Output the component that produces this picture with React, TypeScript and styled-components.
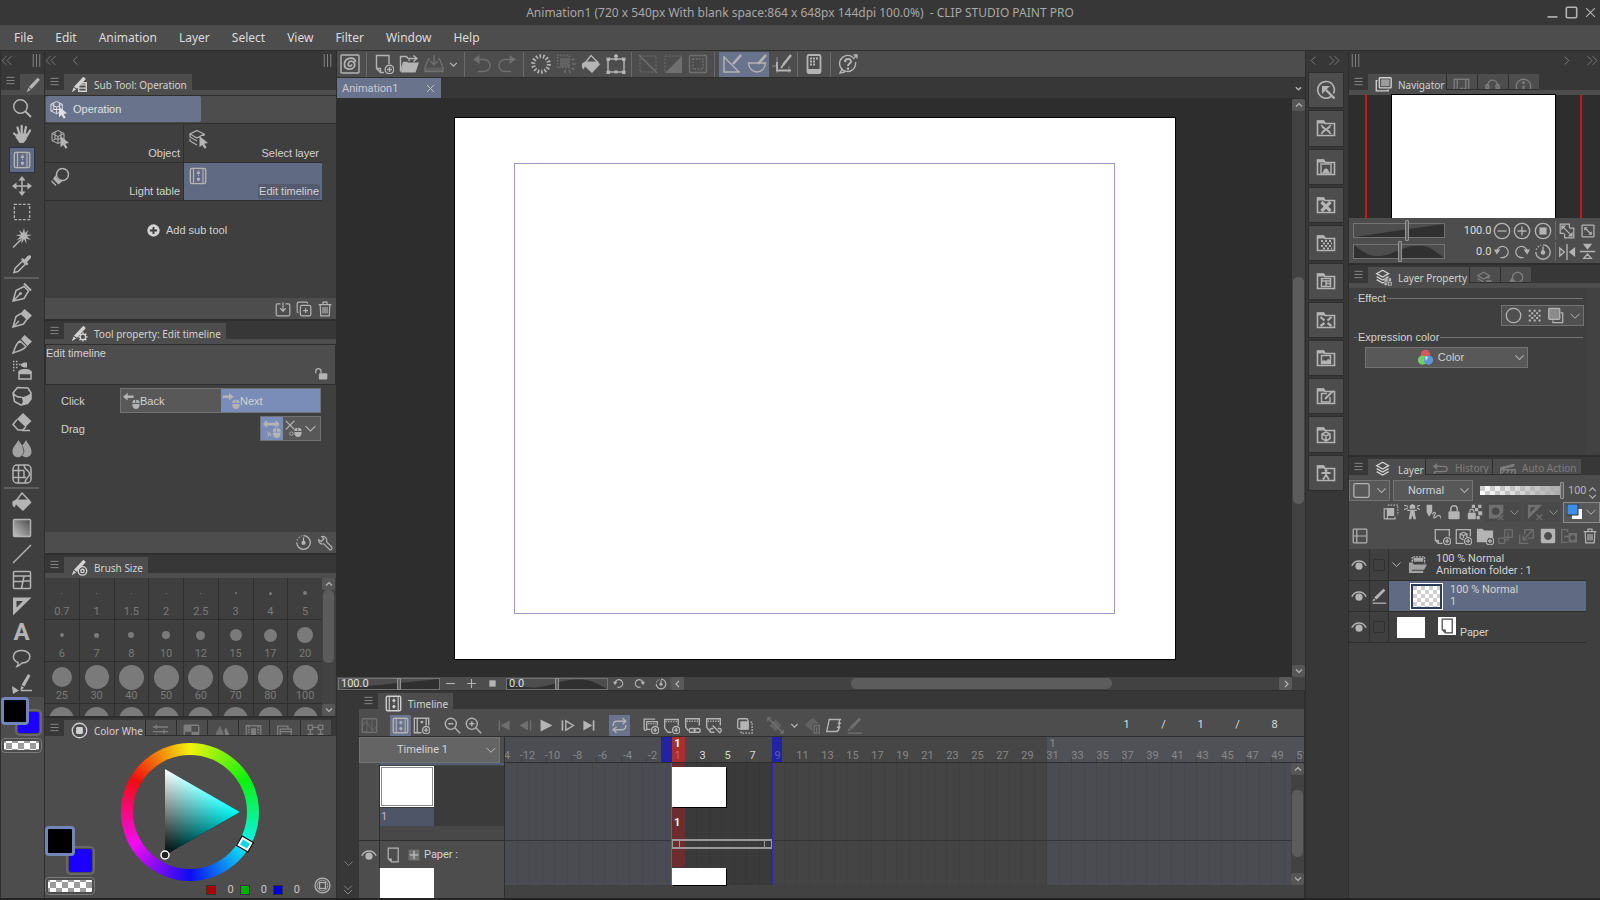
import React from 'react';
import styled, { createGlobalStyle, css } from 'styled-components';

const c = {
  dark: '#373737', bar: '#4d4d4d', body: '#3f3f3f', line: '#2e2e2e', stage: '#2d2d2d',
  sel: '#606a82', selLight: '#69738c', blue: '#798db8', icon: '#b4b4b4', dim: '#6f6f6f',
  text: '#d2d2d2', edge: '#737373', field: '#585858',
};
const ui = '"Noto Sans", "Open Sans", sans-serif';
const arial = '"Liberation Sans", Arial, sans-serif';
const roboto = 'Roboto, "Liberation Sans", sans-serif';

const Global = createGlobalStyle`
  *, *::before, *::after { box-sizing: border-box; }
  body { margin: 0; background: ${c.dark}; color: ${c.text}; font: 11px/14px ${roboto}; }
  button, select, input { font: inherit; color: inherit; margin: 0; }
  button { background: none; border: 0; padding: 0; }
  svg { display: block; flex: none; }
`;

/* ---------- icons, drawn on a 20 x 20 grid ---------- */
const F = { fill: 'currentColor', stroke: 'none' };
const cube = <path d="M8 1.500l6 3v7l-6 3-6-3v-7zM2 4.500l6 3 6-3M8 7.500v7M5 3v7l-3 2M11 3v7M5 10h6" strokeWidth="1" strokeLinejoin="round" />;
const arrow = <path {...F} d="M10.500 7l8.500 7-3.800.7 2.400 3.800-2 1.300-2.400-3.900-2.700 2.300z" />;
const plusBadge = <><circle cx="15.5" cy="15.5" r="4.3" /><path d="M13 15.5h5M15.5 13v5" /></>;
const pencil = <path {...F} d="M14.5 1l3 2.5L7 15l-3.5-2.5zM3 13.5L6 16l-5 3z" />;
const folder = <><path d="M1.5 17.500v-14.500h6l1.500 2.500h9.500v12z" strokeWidth="1.600" /><path {...F} d="M1.500 2.500h6.500l1.500 3h-8z" /></>;
const film = <><rect x="1.5" y="1.5" width="17" height="17" rx="1.5" /><path d="M5 2v16M15.5 2v16" strokeWidth="1.300" /><path d="M10.5 3v14" strokeWidth="1" strokeDasharray="1 2" /><circle {...F} cx="10.5" cy="6.500" r="1.800" /><circle {...F} cx="10.5" cy="13.500" r="1.800" /></>;
const mouse = <><path {...F} d="M11 13v-.5C11 10 12.500 9 14.500 9v4zM15.500 9c2.500 0 4 1 4 3.500v.5h-4z" /><path {...F} d="M11 14h8.500v1c0 3-1.500 5-4.200 5S11 18 11 15z" /></>;
const stack = <path d="M9 1.500l7 4-7 4-7-4zM2 9l7 4 7-4M2 12.500l7 4 7-4" />;

const ICONS: Record<string, React.ReactNode> = {
  search: <><circle cx="8.500" cy="8.500" r="6.800" /><path d="M13.500 13.500l5.500 5.500" strokeWidth="2" /></>,
  hand: <><path d="M2 9.500l4.500 4M5.500 3.500l2 7M9.700 2v8M14 3l-1.500 7M18 6.500l-3.500 6" strokeWidth="2.300" strokeLinecap="round" /><path {...F} d="M5.500 9.500h9.500l-.5 6-3 3.500h-4l-4-6z" /></>,
  film,
  filmPlus: <><path d="M18.500 10V1.500h-17v17H10M5 2v16M15.500 2v8" /><circle {...F} cx="10.500" cy="6" r="1.700" />{plusBadge}</>,
  move: <><path d="M10 3v14M3 10h14" /><path {...F} d="M10 0l3.500 4.500h-7zM10 20l3.500-4.500h-7zM0 10l4.500-3.500v7zM20 10l-4.500-3.500v7z" /></>,
  marquee: <rect x="1.500" y="1.500" width="17" height="17" strokeDasharray="3 1.800" />,
  wand: <><path d="M1 19.500l8-8" /><path {...F} d="M12 0l1 5 3.500-3-2 4.500 5.500.5-5 1.500 4 3.500-5-1.500.5 5.500-2.500-5-2.500 5v-5.500l-5 1.500 4-3.500-5-1.500 5.500-.5-2-4.500 3.500 3z" /></>,
  dropper: <><path d="M2 18.500l1-4 7.500-7.500 3 3-7.500 7.500z" /><path {...F} d="M9 5.500l1.500-1.500 2 1.500 3-3.500c3-2 4.500.5 3 2.500l-3.500 3.500 1.500 2-1.500 1.500z" /></>,
  nib: <><path d="M1 19l3-10.500 8-4 4.500 4.500-4.500 7.500zM1 19l7-7" /><circle {...F} cx="8.500" cy="11.500" r="1.500" /><path d="M12 1.500l7 7" strokeWidth="2" /></>,
  nibSolid: <><path d="M1 19l3-10.500 5-3 6 5.500-3.500 5z" /><path {...F} d="M9 5l3.500-4 7.500 6.500-4.500 4.500z" /><path d="M1 19l6-6" /></>,
  brush: <><path {...F} d="M9 5l3.500-4 7.500 6.500-4.500 4.500z" /><path d="M1 19c2-3 2-9 7-12l6 5.500c-3 4-8 4.500-13 6.500z" /></>,
  airbrush: <><path d="M1 1.500h6M1 4.500h8M1 7.500h6M1 10.500h3" strokeDasharray="1.500 1.500" /><path {...F} d="M9 4l3-1.500h3v5h-3L9 6z" /><path {...F} d="M6 13c0-3 3-4 7-4s7 1 7 4z" /><rect x="7" y="13.500" width="12" height="5.500" /></>,
  tape: <><path d="M1 7l4.500-5.500L16 2l3 5v6l-3.500 4.500L9 19l-6.500-3.500zM1 7c3 4 6 4.500 8.500 4" strokeLinejoin="round" /><path {...F} d="M9 11c4 0 7-1.500 10-4v6l-3.500 4.500L9 19c2-2 2.500-5 0-8z" /></>,
  eraser: <><path {...F} d="M11 1l8.500 8-6 6L5 7z" /><path d="M5 7.500l-4 5 5 5.500h5l3-3.500M10 18.500h8" /></>,
  blend: <><path {...F} opacity=".85" d="M6.500 2C4.500 6 .5 9 .5 13.500a5.500 5.500 0 0 0 9.500 4 5.500 5.500 0 0 0 9.500-4c0-4.500-4-8.500-5.500-11.500-1 2-2.500 4-3.700 5.500C9 6 7.500 4 6.500 2z" /><path d="M10.300 8c2 4 2 7-.3 9.500" stroke="#555" strokeWidth="1" /></>,
  mesh: <><rect x="1" y="1" width="18" height="18" rx="4" /><path d="M6.500 1v18M1 6.500h11M1 13.500h13M12 1c0 4 2 4 4 6s2 4 0 6-3 3-3 6M12 6.500v7" /></>,
  bucket: <><path d="M4 9l6-7.500 7 7" /><path {...F} d="M1 9.500L4 7.500h13l2 3-8 8.500-7-6.500-1.500 3c-1.500-1-2-3.500-1.500-6z" /></>,
  bucketBig: <><path d="M4 9l6-8 8 8.500" /><path {...F} d="M.5 9.500L4 7.500h13l2.500 3L11 19l-7-6.500-1.500 3C.5 14.500 0 12 .5 9.500z" /></>,
  lineT: <path d="M1 19L19 1" />,
  frame: <><rect x="1.500" y="1.500" width="17" height="17" rx="1" /><path d="M1.500 6h17M1.500 11.500h9M12 6l-2.500 12.500M11 11h8" /></>,
  ruler: <path {...F} fillRule="evenodd" d="M1 1.500h18.500L1 19.500zM4.500 5v6.500l6.500-6.500z" />,
  balloon: <path d="M5 18.500c1-1.500 1.500-2.500 1-4-7-3-6-12 4-12s11 12 0 12.500c-1.500 1.500-3 3-5 3.500z" />,
  correct: <><path d="M9 16.500h11" /><path {...F} d="M16 0l2.500 1.500-6 11-3-1.500zM9 12l3 1.500L8.500 17zM0 12l7 4.500L1 20z" /></>,
  objectSel: <>{cube}{arrow}</>,
  layerSel: <><path d="M8 1.500l7 3.500-7 4-7-4zM1 5v3l7 4M1 10v2l7 4M15 5v2" />{arrow}</>,
  lamp: <><circle cx="12.500" cy="7.500" r="6" /><path {...F} d="M5.500 8c1 4 3 5.500 7 6l-4 3.500-5.500-5.500zM1 14.500l1-1 4.500 4.500-1 1z" /></>,
  plusSolid: <><circle {...F} cx="10" cy="10" r="9.500" /><path d="M4.500 10h11M10 4.500v11" stroke="#3f3f3f" strokeWidth="3" /></>,
  save: <path d="M7 3.500H3c-1 0-1.500.5-1.500 1.500v12c0 1 .5 1.500 1.500 1.500h14c1 0 1.500-.5 1.500-1.500v-12c0-1-.5-1.500-1.500-1.500h-4M10 2v10M6.500 9l3.500 4 3.500-4" />,
  dup: <><rect x="5.500" y="5.500" width="13" height="13" rx="2" /><path d="M3 14.500c-1 0-1.500-.5-1.500-1.500V3c0-1 .5-1.500 1.500-1.500h10c1 0 1.500.5 1.500 1.500M12 9v6M9 12h6" /></>,
  trash: <path d="M4 5l.7 13.500h10.600L16 5M2 4.500h16M7.500 4V1.500h5V4M7.500 7.500v8M10 7.500v8M12.500 7.500v8" />,
  subIcon: <>{pencil}<path d="M9 10.500h9M11 8h7v10h-9v-7M9 14.300h9" /></>,
  gearPencil: <>{pencil}<circle cx="14" cy="14" r="3.200" /><path d="M14 8.500v2M14 17.500v2M8.500 14h2M17.500 14h2M10 10l1.500 1.500M16.500 16.500L18 18M18 10l-1.500 1.500M10 18l1.500-1.500" /></>,
  circlePencil: <>{pencil}<circle cx="13.500" cy="14" r="5" /><circle cx="13.500" cy="14" r="2" /></>,
  pencil,
  unlock: <><rect {...F} x="7" y="9" width="12" height="9" rx="1.500" /><path d="M10 9V5.500a3.800 3.800 0 0 0-7.500 0V9" strokeWidth="1.800" /></>,
  back: <><path {...F} d="M0 5.500L5.500 1v3h7v3h-7v3z" />{mouse}</>,
  next: <><path {...F} d="M12.500 5.500L7 1v3H0v3h7v3z" />{mouse}</>,
  drag: <><path {...F} d="M0 4.500L4.500 0v3H14V0l4.500 4.500L14 9V6H4.500v3z" />{mouse}<path d="M5 13l1 5 1.500-4 1.500 4" strokeWidth="1" /></>,
  cut: <><path d="M1 1l10 10M11 1L1 11" />{mouse}<circle cx="7.500" cy="16" r="2" strokeWidth="1" /></>,
  reset: <><path d="M10 2a8 8 0 1 1-8 8" /><path d="M2.500 7.500A8 8 0 0 1 8 2.300" strokeDasharray="1.500 2" /><circle {...F} cx="10" cy="10.500" r="2.500" /><path d="M10 4v7" /></>,
  wrench: <path d="M12 8.500c1-3.500-1.500-7.500-6-6.500l2.500 3-3 3-3.500-2c0 4 3 6 6.500 5l7 7c2 1.500 4-1 3-3z" />,
  wheel: <><circle cx="10" cy="10" r="8.500" /><rect {...F} x="6" y="6" width="8" height="8" rx="1.500" /></>,
  wheelLine: <><circle cx="10" cy="10" r="8.800" /><circle cx="10" cy="10" r="6.300" strokeWidth="1" /><rect x="6.500" y="6.500" width="7" height="7" /></>,
  slidersI: <path d="M1 3.500h18M1 9h18M1 14.500h18M5 1v5M14 6.500v5M5 12v5" />,
  setI: <><rect x="1.500" y="1.500" width="17" height="15" rx="1" /><path {...F} d="M2 2h8v7H2zM10 9h8v7h-8z" /></>,
  mount: <><path {...F} opacity=".7" d="M7 2C5 6 1.500 10 1.500 17H12C12 11 9 6 7 2z" /><path {...F} d="M14 4c-1 1-1.500 3-2 4 1 2 1.500 6 1.500 9h5c0-5-2.500-9-4.500-13z" /></>,
  strip: <><rect x="1.500" y="2" width="17" height="15" /><path d="M4.500 2v15M15.500 2v15" strokeDasharray="2 1.500" strokeWidth="2.500" /><rect {...F} x="7" y="5" width="6" height="9" /></>,
  folders: <><rect x="5" y="6" width="13" height="12" /><path d="M2 14V2.500h12V6M5 9h13" /></>,
  nodes: <><rect x="1.500" y="1.500" width="5" height="5" /><rect x="13.500" y="1.500" width="5" height="5" /><rect x="1.500" y="12" width="5" height="5" /><rect x="13.500" y="12" width="5" height="5" /><path d="M6.500 4h7M4 6.500V12M16 6.500V12" /></>,
  clip: <><rect x="1" y="1" width="18" height="18" rx="1" /><path d="M15.500 8c0-6-10.500-5-11 2s8.500 6 10 2-4.500-7-6-3 2.500 3.500 3.500 1.500" strokeWidth="1.700" /></>,
  newDoc: <><path d="M15 10V1.500H2.500v13l4 4H10M2.500 14.500h4v4" />{plusBadge}</>,
  open: <><path d="M9 4.500l-1.500-2H1.500v15l3-9h4M10 7V4.500h7M14.500 1.500l3.500 3-3.500 3" /><path {...F} d="M5 8.500h15l-3.500 10H2z" /></>,
  saveDisk: <><path d="M10 1v9M6.500 7l3.500 4 3.500-4M6 5H4.500L1 13.500v4h18v-4L15.500 5H14" /><path {...F} opacity=".5" d="M1 13.500h18v4H1z" /></>,
  undo: <><path d="M4 5.500h8a6 6 0 0 1 0 12H6" /><path {...F} d="M1 5.500L7.500 1v9z" /></>,
  redo: <><path d="M16 5.500H8a6 6 0 0 0 0 12h6" /><path {...F} d="M19 5.500L12.500 1v9z" /></>,
  burst: <circle cx="10" cy="10" r="7.800" strokeWidth="4" strokeDasharray="1.600 1.900" />,
  burstSel: <><rect x="1.500" y="1.500" width="12" height="12" strokeDasharray="1.500 1.500" /><rect {...F} opacity=".6" x="4" y="4" width="9" height="9" /><path d="M15.500 6l3-1M16 10h3.500M15.500 14l3 1.500M13 16l1.500 3M9 16v3" /></>,
  transform: <><rect x="2" y="5" width="16" height="13" /><path d="M10 0v5" /><path {...F} d="M.5 3.500h3.500v3.500H.5zM16 3.500h3.500v3.500H16zM.5 16.500h3.500V20H.5zM16 16.500h3.500V20H16zM8.500 3.500h3v3h-3zM8.500 16.500h3v3h-3zM8 1h4v2H8z" /></>,
  desel: <><rect x="2" y="2" width="16" height="16" strokeDasharray="2 1.500" strokeWidth="1" /><path d="M1 1l18 18" /></>,
  invert: <><rect x="2" y="2" width="16" height="16" strokeDasharray="2 1.500" strokeWidth="1" /><path {...F} d="M19 2v17H2z" /></>,
  selBorder: <><rect x="1.500" y="1.500" width="17" height="17" rx="1" /><rect x="5" y="5" width="10" height="10" strokeDasharray="1.500 1.500" /></>,
  snapRuler: <><path d="M2 2v16h16M2 3l15 15" /><path d="M19 1l-8 9" strokeWidth="2.500" /></>,
  snapSpecial: <><path d="M1.500 9h9M14 9h4.500c-1 12-16 12-17 0z" /><path d="M19 1l-8 9" strokeWidth="2.500" /></>,
  snapGrid: <><path d="M5 3v16M0 12h5M17 12v7" strokeWidth="1" opacity=".6" /><path d="M19 1l-8 10" strokeWidth="2.500" /><path d="M5 8v8.500h14M9 14l3-4" strokeWidth="1.800" /></>,
  phone: <><rect x="3.500" y="1" width="13" height="18" rx="1.500" strokeWidth="1.800" /><path {...F} d="M3.500 15h13v4h-13z" /><path d="M6 4.500h9M6 7.500h6M6 10.500h6" strokeDasharray="2 1" strokeWidth="2" /></>,
  help: <><path d="M15 3.500A8 8 0 1 0 17.500 8M4 15l-2 4 5-1M15 5l4-4M15.500 1H19v3.500" /><path d="M7 8c0-4 6-4 6-.5 0 2-3 2-3 4.500" strokeWidth="2" /><circle {...F} cx="10" cy="14.500" r="1.300" /></>,
  minusC: <><circle cx="10" cy="10" r="8.500" /><path d="M5 10h10" /></>,
  plusC: <><circle cx="10" cy="10" r="8.500" /><path d="M5 10h10M10 5v10" /></>,
  squareC: <><circle cx="10" cy="10" r="8.500" /><rect {...F} x="6" y="6" width="8" height="8" /></>,
  rotL: <><path d="M4 8a7 7 0 1 1 4 8.500" /><path {...F} d="M0 7h8l-4.500 6z" /></>,
  rotR: <><path d="M16 8a7 7 0 1 0-4 8.500" /><path {...F} d="M20 7h-8l4.500 6z" /></>,
  fit1: <><path d="M13 6V1.500H1.500V13H6M13 6.500h5.500V18.500H7V13M4 4l12 12" /><path {...F} d="M3 3h6L3 9zM17 17h-6l6-6z" /></>,
  fit2: <><rect x="1.500" y="1.500" width="17" height="17" rx="1" /><path d="M6 6l8 8" /><path {...F} d="M4.500 4.500h5l-5 5zM15.500 15.500h-5l5-5z" /></>,
  flipH: <><path d="M10 1v18M2 5.500v9l5-4.500z" /><path {...F} d="M19 4.500v11L12 10z" /></>,
  flipV: <><path d="M1 10h18M5.500 18h9l-4.500-5z" /><path {...F} d="M4.500 1h11L10 8z" /></>,
  navigator: <><rect x="5" y="2" width="14" height="12" rx="1" /><rect {...F} opacity=".6" x="7" y="4" width="10" height="8" /><path d="M3 5.500H1.500V17.500h14V16" /></>,
  subview: <><rect x="1.500" y="1.500" width="17" height="17" /><path d="M5 2v14M15 2v14" /><path {...F} d="M6 14l4-3 2 1.500 3-2V18H6z" /></>,
  itemBank: <><path d="M4 10c0-10 12-10 12 0M2 18v-6h3l2 2h6l2-2h3v6" /><circle cx="4" cy="10" r="2" /><circle cx="16" cy="10" r="2" /></>,
  info: <><circle cx="10" cy="10" r="8.500" /><path d="M10 9v7" strokeWidth="2.500" /><circle {...F} cx="10" cy="5.500" r="1.600" /></>,
  layers: stack,
  layerProp: <>{stack}<rect fill="#4d4d4d" stroke="none" x="11" y="11" width="9" height="9" /><path {...F} d="M11 11h4v4h-4zM16 11h3v3h-3zM11 16h3v3h-3z" opacity=".8" /><rect x="15.500" y="15.500" width="3.500" height="3.500" strokeWidth="1" /></>,
  layerSearch: <><path d="M9 1.500l7 4-7 4-7-4zM2 9l7 4M2 12.500l7 4M12 8h4" /><path {...F} d="M11 11h8l-4 5z" /></>,
  border: <circle cx="10" cy="10" r="8.500" />,
  tone: <path d="M1 2.500h18M1 9.500h18M1 16.500h18M4.500 6h14M4.500 13h14" strokeDasharray="3 4" strokeWidth="2.800" />,
  layerColor: <><path d="M16 7h2.500v11.500H7V16" /><rect fill="#8b8b8b" x="2" y="1.500" width="13" height="13" rx="1" /></>,
  history: <><path d="M5 4h9c5 0 5 6 0 6H5c-3 0-3 6 0 6h4" /><path {...F} d="M1 4l5-4v8z" /></>,
  auto: <><path d="M2 8h17v11H2zM2 6l16-4M6 9l-2 3M11 9l-2 3M16 9l-2 3" /><path {...F} d="M1 5l17-4v3L2 8z" /></>,
  clipBelow: <><rect x="1.500" y="6" width="4" height="12.500" /><path d="M5 18.500h10V16" /><rect {...F} x="5" y="5" width="9" height="10" /><path d="M6 1.500h12.500V14" strokeDasharray="2 1.500" /></>,
  lighthouse: <><path {...F} d="M8 8h5l2 11h-3l-1.500-5L9 19H6zM7 2l3.500-2L14 2v4H7z" /><path d="M5 3L0 1.500M5 5l-5 2M16 3l4-1.500M16 5l4 2M4 8h12" /></>,
  draft: <><path {...F} d="M2 1h7v9l-4 6-3-6z" /><path d="M9 13c3-5 5-2 3 1s-1 5 2 2 5-2 6 2" /></>,
  lock: <><rect {...F} x="3" y="9" width="14" height="10" rx="1.500" /><path d="M6 9V6c0-5 8-5 8 0v3" strokeWidth="1.800" /></>,
  lockAlpha: <><rect {...F} x="1" y="11" width="10" height="8" rx="1" /><path d="M3.500 11V9c0-3 5-3 5 0v2" /><path {...F} d="M6 1h4v4H6zM14 1h4v4h-4zM10 5h4v4h-4zM14 9h5v5h-5zM12 15h4v4h-4z" /></>,
  maskX: <><path {...F} fillRule="evenodd" d="M1 1h17v9l-7 7H1zM9 4a4.500 4.500 0 1 0 .1 0z" /><path d="M12 13l6 6M18 13l-6 6" /></>,
  rulerX: <><path {...F} fillRule="evenodd" d="M1 1h17L1 18zM4 4v6l6-6z" /><path d="M11 12l7 7M18 12l-7 7" /></>,
  palette: <><rect x="1.500" y="1.500" width="17" height="17" rx="1" /><path d="M6 2v16M2 10h4M6 10h12" /></>,
  newLayer: <><path d="M18 10V2H1.500v12.500L5 18h5M1.500 14.500H5V18" />{plusBadge}</>,
  newVec: <><path d="M18 10V2H1.500v16H10" /><path d="M10 5l4 2v4M10 5L6 7v5l4 2M6 7l4 2 4-2M10 9v3" />{plusBadge}</>,
  newFolder: <><path {...F} d="M1 2h6l2 2h10v8h-5l-3 5H1z" />{plusBadge}</>,
  transfer: <><rect x="9" y="2" width="9" height="9" rx="1" /><rect x="2" y="12" width="7" height="6" rx="1" /><path d="M13 5v9h-4" /></>,
  merge: <path d="M8 8V2h10v10h-6M2 8v10h10M17 3L6 14M6 9v5h5" />,
  mask: <path {...F} fillRule="evenodd" d="M2.500 1h15c1 0 1.500.5 1.500 1.500v15c0 1-.5 1.500-1.500 1.500h-15C1.500 19 1 18.500 1 17.500v-15C1 1.500 1.500 1 2.500 1zM10 5a5 5 0 1 0 .1 0z" />,
  applyMask: <><path d="M9 5V2H2v15h7M5 10h6" /><path {...F} fillRule="evenodd" d="M10 6h10v11H10zM15 8.500a3 3 0 1 0 .1 0z" /></>,
  eye: <><path d="M1 11c4-8 14-8 18 0" strokeWidth="1.800" /><circle {...F} cx="10" cy="11.500" r="4.500" /></>,
  edit: <><path d="M2 19h17" strokeWidth="1.600" /><path {...F} d="M15.500 1l2.500 2L7 14.500 4 12zM3.500 13l2.500 2-4.500 2z" /></>,
  animFolder: <><path d="M4.500 7V2h13v7M6 4.500h10" strokeDasharray="2 1" /><path {...F} d="M1 8h4l1 2h14l-3 5.500H4v1h12V19H1zM6 3h10v4H6z" opacity=".85" /></>,
  page: <><path d="M4 1.500h12.500v17H8L4 14.500z" /><path {...F} d="M4 14.500h4.500v4z" /></>,
  graph: <><rect x="1.500" y="2" width="17" height="16" rx="1" /><path d="M2 11c3-7 5-6 8 0s5 5 8 0M7 2v16M13 2v16" strokeWidth="1" /></>,
  zoomOut: <><circle cx="8" cy="8" r="6.500" /><path d="M5 8h6M13 13l6 6" /></>,
  zoomIn: <><circle cx="8" cy="8" r="6.500" /><path d="M5 8h6M8 5v6M13 13l6 6" /></>,
  first: <><path d="M4 4v12" /><path {...F} d="M16 4v12L5.500 10z" /></>,
  prev: <><path d="M16 4v12" /><path {...F} d="M13 4v12L3 10z" /></>,
  play: <path {...F} d="M3 3l14 7-14 7z" />,
  nextF: <><path d="M4 4v12" strokeWidth="2" /><path d="M8 4.500v11l9-5.500z" /></>,
  last: <><path d="M16 4v12" strokeWidth="2" /><path {...F} d="M4 4v12l10.500-6z" /></>,
  loop: <path d="M2.500 10.500c0-4 2-5.500 4.500-5.500h10M17.500 9.500c0 4-2 5.500-4.500 5.500H3M13.500 1.500l4 3.500-4 3.500M6.500 11.500L2.500 15l4 3.500" />,
  celFolder: <><path d="M18 10V5.500H5.500v9H10M2.500 15V2.500h13M5.500 15.500h-3" /><path d="M7 8h9" strokeDasharray="1 1" />{plusBadge}</>,
  celNew: <><path d="M18 10V3H2v10l4 5h4" /><path d="M3 5.500h15" strokeDasharray="1.500 1.500" />{plusBadge}</>,
  celLink: <><path d="M18 10V2H2v10l3 4" /><path d="M3 5h14" strokeDasharray="1.500 1.500" /><rect x="6" y="13.500" width="7" height="4.500" rx="2.200" /><rect x="12" y="13.500" width="7" height="4.500" rx="2.200" /></>,
  celCut: <><path d="M18 10V2H2v10l3 4M9 10l9 9" /><path d="M3 5h14" strokeDasharray="1.500 1.500" /><path d="M10 13.500H8c-3 0-3 4.500 0 4.500h3M15 13.500h2c3 0 2.500 4 .5 4.500" /></>,
  onion: <><rect x="2" y="2" width="12" height="12" rx="2" /><rect {...F} x="5" y="5" width="10" height="10" /><path d="M17 6h2v13H6v-2" strokeDasharray="2 1.500" /></>,
  diamond: <><path {...F} opacity=".6" d="M10 3l7 7-7 7-7-7z" /><path d="M2 2l16 16M1 5V1h4M19 15v4h-4" /></>,
  diamondDel: <><path {...F} opacity=".6" d="M10 1l8 7h-8v9L1 9z" /><path d="M11 10h8M12 11v8h6v-8M15 12v6" /></>,
  fps: <path d="M4 3h15M5 3L2 17h11c2 0 3-1 3.500-4L17 3M15 7.500h4M14 12h4" />,
  color: <><circle cx="10" cy="6.500" r="5.500" fill="#d25a5a" stroke="none" /><circle cx="6.500" cy="13" r="5.500" fill="#6fd25c" stroke="none" /><circle cx="13.500" cy="13" r="5.500" fill="#5a98d8" stroke="none" /><path d="M10 8l3 2-3 4z" fill="#cfeaf2" stroke="none" /></>,
  quick: <><path d="M15 16.500a8.300 8.300 0 1 1 2.500-3" strokeWidth="1.600" /><path d="M10 10l8.500 8.500" strokeWidth="2.400" /><path {...F} d="M6 6h8L6 14z" /></>,
  f1: <>{folder}<path d="M5 7l10 9M15 7L5 16M6 9l8 5M14 9l-8 5" strokeWidth="1.600" /></>,
  f2: <>{folder}<rect x="5" y="7" width="10" height="9" strokeWidth="2" opacity=".7" /><path {...F} d="M7 16c0-6 6-6 6 0z" /></>,
  f3: <>{folder}<path d="M5.500 7l9 9M14.500 7l-9 9" strokeWidth="3.200" /></>,
  f4: <>{folder}<path d="M5 8h11M7 10.500h9M5 13h11M7 15.500h9" strokeDasharray="2 2" strokeWidth="2" /></>,
  f5: <>{folder}<rect x="5.500" y="7.500" width="9" height="8" /><path d="M5.500 10h9M10 10v5M10 12.500h4.500" /></>,
  f6: <>{folder}<path d="M4.500 7l4 3.500M15.500 7l-4 3.500M4.500 16l4-3M15.500 16l-4-3" strokeWidth="2.200" /></>,
  f7: <>{folder}<rect x="5.500" y="7.500" width="9" height="8" /><path {...F} d="M6 13l2-1 2 1 2-2 2.500 1v3H6z" /></>,
  f8: <>{folder}<path d="M11 7.500H5.500v8.500h8.500v-5" /><path d="M17 5l-8 8" strokeWidth="2" /></>,
  f9: <>{folder}<path d="M10 7l4 2v4.500l-4 2.500-4-2.500V9zM6 9l4 2 4-2M10 11v5" /></>,
  f10: <>{folder}<circle {...F} cx="10" cy="7.500" r="1.500" /><path d="M5.500 10h9M10 9v4M10 12l-3 4.500M10 12l3 4.500" strokeWidth="1.800" /></>,
  down: <path d="M4 7l6 6 6-6" />,
  downWide: <path d="M1 5.500l9 9 9-9" />,
  up: <path d="M4 13l6-6 6 6" />,
  left: <path d="M12 4l-6 6 6 6" />,
  right: <path d="M8 4l6 6-6 6" />,
  leftTall: <path d="M14 1l-9 9 9 9" />,
  rightTall: <path d="M6 1l9 9-9 9" />,
  lefts: <path d="M10 2l-8 8 8 8M19 2l-8 8 8 8" />,
  rights: <path d="M1 2l8 8-8 8M10 2l8 8-8 8" />,
  downs: <path d="M2 1l8 8 8-8M2 10l8 8 8-8" />,
  burger: <path d="M1 3h18M1 10h18M1 17h18" strokeWidth="2.200" />,
  grip: <path d="M5 0v20M10 0v20M15 0v20" strokeWidth="1.500" />,
  close: <path d="M2 2l16 16M18 2L2 18" />,
  min: <path d="M1 18h18" strokeWidth="3" />,
  max: <rect x="2" y="2" width="16" height="16" rx="2" strokeWidth="2.500" />,
  minus: <path d="M2 10h16" />,
  plus: <path d="M2 10h16M10 2v16" />,
  square: <rect {...F} x="3" y="3" width="14" height="14" />,
  plusBox: <><rect {...F} x="1" y="1" width="18" height="18" rx="2" opacity=".35" /><path d="M3 10h14M10 3v14" strokeWidth="2.500" /></>,
  box: <rect x="1" y="2" width="18" height="16" rx="2" strokeWidth="1.500" />,
};

const Icon = ({ n, s = 20, w = 1.5 }: { n: string; s?: number; w?: number }) => (
  <svg width={s} height={s} viewBox="0 0 20 20" fill="none" stroke="currentColor" strokeWidth={w} aria-hidden="true">{ICONS[n]}</svg>
);
const GradientIcon = () => (
  <svg width="20" height="20" viewBox="0 0 20 20" aria-hidden="true">
    <defs><linearGradient id="toolGrad" x1="1" y1="0" x2="0" y2="1"><stop offset="0" stopColor="#4a4a4a" /><stop offset="1" stopColor="#c4c4c4" /></linearGradient></defs>
    <rect x="1.5" y="1.5" width="17" height="17" rx="1" fill="url(#toolGrad)" stroke="#b4b4b4" strokeWidth="1.5" />
  </svg>
);

/* ---------- shell ---------- */
const Page = styled.div`display: grid; grid-template-rows: 25px 25px 1fr 2px; min-height: 100vh; background: ${c.dark};`;
const TitleBar = styled.header`display: grid; grid-template-columns: 80px 1fr 80px; align-items: center; color: #a8a8a8; font: 12px/18px ${ui};`;
const Title = styled.h1`grid-column: 2; margin: 0; font: inherit; text-align: center; white-space: pre;`;
const WinButtons = styled.div`display: flex; justify-content: flex-end; gap: 7px; padding-right: 4px; color: ${c.icon};`;
const MenuBar = styled.nav`display: flex; background: ${c.bar}; padding-left: 3px; font: 12px/24px ${ui}; color: #dcdcdc;`;
const MenuItem = styled.button`padding: 0 11px;`;
const Work = styled.div`display: grid; grid-template-columns: 44px 292px minmax(0, 1fr) 43px 252px; border-top: 1px solid ${c.line};`;
const Bottom = styled.div`background: #242424;`;

const Column = styled.div`display: flex; flex-direction: column; min-width: 0; border-left: 1px solid ${c.line};`;
const DockBar = styled.div<{ $gap?: number }>`
  display: flex; align-items: center; height: 21px; flex: none; padding: 0 2px 2px 0; gap: ${p => p.$gap ?? 0}px; color: #858585;
`;
const Spacer = styled.span`flex: 1;`;
const Gap = styled.div`height: 2px; flex: none; background: ${c.line};`;
const Plain = styled.button<{ $dim?: boolean }>`
  display: grid; place-items: center; color: ${p => (p.$dim ? c.dim : 'inherit')};
`;

const Strip = styled.div`
  display: flex; align-items: flex-start; flex: none; height: 23px; padding-top: 2px;
  background: linear-gradient(${c.dark} 18px, ${c.bar} 18px);
`;
const Burger = styled.button`width: 19px; height: 14px; display: grid; place-items: center; color: #858585;`;
const Tab = styled.button<{ $on?: boolean; $w?: number }>`
  display: flex; align-items: center; overflow: hidden; white-space: nowrap; background: ${c.bar};
  font: 10px/14px ${ui};
  ${p => (p.$on
    ? css`height: 21px; gap: 6px; padding: 0 5px 0 7px; color: ${c.text};`
    : css`height: 16px; align-items: flex-start; gap: 6px; padding: 4px 6px 0; line-height: 11px; color: #7d7d7d; border: solid ${c.line}; border-width: 0 0 1px 1px;`)}
  ${p => p.$w && css`width: ${p.$w}px; padding-right: 0;`}
`;

type TabDef = { icon: string; label?: string; name: string; w?: number };
const Tabs = ({ tabs }: { tabs: TabDef[] }) => (
  <Strip role="tablist">
    <Burger aria-label="Palette menu"><Icon n="burger" s={9} /></Burger>
    {tabs.map((t, i) => (
      <Tab key={t.name} role="tab" aria-selected={i === 0} aria-label={t.name} $on={i === 0} $w={t.w ?? (i ? 31 : undefined)}>
        <Icon n={t.icon} s={17} w={1.6} />{t.label}
      </Tab>
    ))}
  </Strip>
);

const Body = styled.div`background: ${c.body};`;
const Footer = styled.div`
  display: flex; justify-content: flex-end; align-items: center; gap: 5px; flex: none;
  height: 21px; padding-right: 3px; background: ${c.bar}; color: ${c.icon};
`;

/* ---------- tools ---------- */
const ToolTab = styled.div`
  height: 23px; flex: none; padding: 2px 0 0 19px; background: linear-gradient(${c.dark} 18px, ${c.bar} 18px); position: relative;
`;
const ToolTabFace = styled.div`height: 21px; background: ${c.bar}; display: grid; place-items: center end; padding-right: 2px; color: ${c.icon};`;
const ToolBurger = styled.button`position: absolute; left: 5px; top: 4px; color: #858585;`;
const ToolList = styled.div`background: ${c.body}; display: flex; flex-direction: column; align-items: center; padding-right: 2px; color: ${c.icon};`;
const ToolButton = styled.button<{ $on?: boolean }>`
  width: 24px; height: 24px; margin: 1px 0; display: grid; place-items: center;
  background: ${p => (p.$on ? c.sel : 'transparent')}; outline: ${p => (p.$on ? '1px solid #2b3245' : 'none')};
`;
const ToolRule = styled.div`width: 35px; height: 2px; background: #5e5e5e;`;
const LetterA = styled.span`font: 700 24px/24px ${roboto};`;
const Swatches = styled.div<{ $big?: boolean }>`
  display: grid; grid-template-columns: ${p => (p.$big ? '21px 29px' : '14px 27px')};
  grid-template-rows: ${p => (p.$big ? '20px 29px 20px' : '12px 27px 17px')};
`;
const Main = styled.button<{ $big?: boolean }>`
  grid-area: 1 / 1 / 3 / 3; z-index: 1; width: ${p => (p.$big ? 30 : 28)}px; height: ${p => (p.$big ? 30 : 28)}px;
  background: #000; border: 3px solid #7386b8; border-radius: 4px;
`;
const Sub = styled.button`grid-area: 2 / 2; border: 2px solid #686868; border-radius: 5px; padding: 1px; background: #1c00ff content-box;`;
const Clear = styled.button`
  grid-area: 3 / 1 / 4 / 3; border: 1px solid #7a7a7a; border-radius: 4px; margin-top: 2px; padding: 2px;
  background: repeating-conic-gradient(#fff 0 25%, #9c9c9c 0 50%) 2px 2px / 12px 12px content-box;
`;
const SwatchSet = ({ big }: { big?: boolean }) => (
  <Swatches $big={big}>
    <Main $big={big} aria-label="Main color" /><Sub aria-label="Sub color" /><Clear aria-label="Transparent" />
  </Swatches>
);
const Filler = styled.div`flex: 1; background: ${c.bar};`;

/* ---------- sub tool panel ---------- */
const GroupRow = styled.div`background: ${c.bar}; border: solid ${c.line}; border-width: 1px 0; height: 29px; padding: 0 1px; flex: none;`;
const GroupTab = styled.button`
  display: flex; align-items: center; gap: 5px; width: 155px; height: 26px; padding-left: 3px; border-radius: 2px;
  background: ${c.selLight}; font: 11px/14px ${arial}; color: #e0e0e0;
`;
const SubBody = styled(Body)`height: 174px; padding: 1px 14px 0 0; flex: none;`;
const SubGrid = styled.div`display: grid; grid-template-columns: 1fr 1fr; grid-auto-rows: 37px; gap: 1px; background: ${c.line}; border-bottom: 1px solid ${c.line};`;
const SubTool = styled.button<{ $on?: boolean }>`
  display: flex; justify-content: space-between; align-items: flex-start; padding: 4px 2px 1px 5px;
  background: ${p => (p.$on ? c.sel : c.body)}; color: ${c.icon};
  span { align-self: flex-end; font: 11px/15px ${arial}; color: ${c.text}; padding: 0 1px; background: ${p => (p.$on ? '#545b6c' : 'none')}; border-radius: 2px; }
`;
const AddSub = styled.button`display: flex; align-items: center; gap: 6px; margin: 21px auto 0; padding-left: 7px; font: 11px/16px ${arial}; color: ${c.text};`;

/* ---------- tool property ---------- */
const PropHead = styled.div`
  display: flex; justify-content: space-between; height: 41px; flex: none; background: ${c.bar}; border: 1px solid ${c.line};
  font: 11px/17px ${arial}; padding-right: 7px; color: ${c.text}; svg { align-self: flex-end; margin-bottom: 3px; color: ${c.icon}; }
`;
const PropBody = styled(Body)`height: 147px; flex: none; padding: 3px 15px 0 16px; font: 11px/14px ${arial};`;
const PropRow = styled.div`display: flex; justify-content: space-between; align-items: center; height: 25px; margin-bottom: 3px;`;
const Segment = styled.div`display: flex; height: 25px; border: 1px solid ${c.edge}; background: ${c.field};`;
const SegButton = styled.button<{ $on?: boolean; $w: number }>`
  display: flex; align-items: center; width: ${p => p.$w}px; padding-left: 2px;
  background: ${p => (p.$on ? c.blue : 'transparent')}; color: ${c.icon};
  span { color: ${c.text}; }
`;

/* ---------- brush sizes ---------- */
const BrushArea = styled.div`display: flex; height: 138px; flex: none; overflow: hidden; background: ${c.body}; padding-right: 1px;`;
const BrushGrid = styled.div`flex: 1; display: grid; grid-template-columns: repeat(8, 1fr); grid-auto-rows: 41px; gap: 1px; background: ${c.line};`;
const BrushCell = styled.button`
  display: grid; grid-template-rows: 30px 10px; justify-items: center; align-items: center; align-content: start;
  background: ${c.body}; color: #7a7a7a; font: 11px/10px ${roboto};
  span { margin-top: -3px; background: rgba(63, 63, 63, .55); }
`;
const Dot = styled.i<{ $d: number }>`width: ${p => p.$d}px; height: ${p => p.$d}px; border-radius: 50%; background: #7a7a7a;`;

/* ---------- scrollbars ---------- */
const VBar = styled.div`width: 13px; flex: none; display: flex; flex-direction: column; background: #424242;`;
const VBtn = styled.button`height: 12px; display: grid; place-items: center; background: #565656; border-radius: 2px; color: ${c.icon};`;
const VTrack = styled.div<{ $a: number; $b: number }>`flex: 1; display: grid; grid-template-rows: ${p => p.$a}fr ${p => p.$b}fr ${p => 100 - p.$a - p.$b}fr; padding: 0 1px;
  &::before { content: ''; grid-row: 2; background: #5c5c5c; border-radius: 5px; }`;
const VScroll = ({ a, b }: { a: number; b: number }) => (
  <VBar>
    <VBtn aria-label="Scroll up"><Icon n="up" s={10} w={2.4} /></VBtn>
    <VTrack $a={a} $b={b} />
    <VBtn aria-label="Scroll down"><Icon n="down" s={10} w={2.4} /></VBtn>
  </VBar>
);

/* ---------- sliders ---------- */
const SliderBox = styled.div<{ $w: number; $h: number }>`
  position: relative; width: ${p => p.$w}px; height: ${p => p.$h}px; flex: none; border: 1px solid ${c.edge}; background: ${c.bar};
  svg { width: 100%; height: 100%; }
`;
const Range = styled.input<{ $t?: number }>`
  position: absolute; inset: -4px 0; appearance: none; background: none; width: 100%; height: calc(100% + 8px);
  &::-webkit-slider-thumb { appearance: none; width: 4px; height: ${p => p.$t ?? 21}px; background: #606060; border: 1px solid #959595; border-radius: 1px; }
`;
const SliderText = styled.span`position: absolute; left: 2px; top: -2px; color: #e0e0e0; font: 11px/14px ${roboto};`;
const ShapeSlider = ({ kind, w, h, value, name, text }: { kind: 'ramp' | 'sine'; w: number; h: number; value: number; name: string; text?: string }) => (
  <SliderBox $w={w} $h={h}>
    <svg viewBox="0 0 100 20" preserveAspectRatio="none" fill="#303030">
      {kind === 'ramp' ? <path d="M0 20L100 0v20z" /> : <path d="M0 0C10 11 16 17 26 17S42 12 50 8c10-6 14-7 24-7s16 8 26 19H0z" />}
    </svg>
    {text && <SliderText>{text}</SliderText>}
    <Range type="range" $t={text ? h : undefined} min={0} max={100} defaultValue={value} aria-label={name} />
  </SliderBox>
);

/* ---------- color panel ---------- */
const ColorBody = styled.div`flex: 1; display: grid; grid-template-columns: 76px 1fr; background: ${c.bar};`;
const ColorLeft = styled.div`align-self: end; padding: 0 0 3px;`;
const ColorRight = styled.div`display: flex; flex-direction: column;`;
const WheelBox = styled.div`position: relative; width: 138px; height: 138px; margin-top: 2px;`;
const Hue = styled.div`
  position: absolute; inset: 0; border-radius: 50%;
  background: conic-gradient(#f2f20c, #0cf20c 60deg, #0cf2f2 120deg, #0c0cf2 180deg, #f20cf2 240deg, #f20c0c 300deg, #f2f20c);
`;
const Hole = styled.div`position: absolute; inset: 12px; border-radius: 50%; background: ${c.bar};`;
const Triangle = styled.svg`position: absolute; inset: 0; isolation: isolate; .add { mix-blend-mode: screen; }`;
const Rgb = styled.div`
  display: flex; align-items: center; justify-content: flex-end; gap: 7px; height: 17px; padding-right: 5px;
  color: #c8c8c8; button { color: ${c.icon}; margin: -8px 0 0 7px; }
`;
const Channel = styled.span<{ $c: string }>`display: flex; align-items: center; gap: 12px; &::before { content: ''; width: 8px; height: 8px; background: ${p => p.$c}; outline: 1px solid #333; }`;

/* ---------- center ---------- */
const Center = styled.main`display: flex; flex-direction: column; min-width: 0; border-left: 1px solid ${c.line};`;
const Toolbar = styled.div`display: flex; align-items: center; height: 26px; flex: none; background: ${c.bar}; color: ${c.icon};`;
const TB = styled.button<{ $on?: boolean; $dim?: boolean; $w?: number }>`
  width: ${p => p.$w ?? 25}px; height: 25px; display: grid; place-items: center; flex: none;
  background: ${p => (p.$on ? c.selLight : 'none')}; color: ${p => (p.$dim ? c.dim : c.icon)};
`;
const Rule = styled.i<{ $m?: number }>`width: 1px; height: 25px; flex: none; background: #6a6a6a; margin: 0 ${p => p.$m ?? 4}px;`;
const DocTabs = styled.div`display: flex; height: 22px; flex: none; justify-content: space-between; align-items: center; background: ${c.dark}; border: solid ${c.line}; border-width: 1px 0; padding-right: 2px; color: ${c.icon};`;
const DocTab = styled.div`display: flex; align-items: center; justify-content: space-between; width: 104px; height: 20px; padding: 1px 6px 0 5px; background: ${c.selLight}; color: #c8cbd3;`;
const StageRow = styled.div`flex: 1; display: flex; min-height: 0;`;
const Stage = styled.div`flex: 1; display: grid; place-items: center; background: ${c.stage};`;
const Paper = styled.div`width: 720px; height: 541px; display: grid; place-items: center; background: #fff; outline: 1px solid #000;`;
const Frame = styled.div`width: 601px; height: 451px; border: 1px solid #9d99c4;`;
const ViewBar = styled.div`display: flex; align-items: center; height: 14px; flex: none; background: #424242; color: ${c.icon}; border-bottom: 1px solid ${c.line};`;
const ViewTools = styled.div`display: flex; align-items: center; background: ${c.bar}; height: 13px; padding-left: 1px; > button { width: 21px; height: 13px; }`;
const ViewGap = styled.i`width: 3px;`;
const ScrollEnd = styled.button`&& { width: 13px; } height: 13px; display: grid; place-items: center; background: #5a5a5a; border-radius: 2px; color: ${c.icon}; flex: none;`;
const Corner = styled.i`width: 13px; flex: none;`;
const HTrack = styled.div`flex: 1; display: grid; grid-template-columns: 28fr 44fr 28fr; &::before { content: ''; grid-column: 2; height: 11px; background: #5c5c5c; border-radius: 5px; }`;

/* ---------- timeline ---------- */
const TimelineRow = styled.section`display: flex; flex: none; height: 207px;`;
const Gutter = styled.div`width: 22px; display: flex; flex-direction: column; justify-content: flex-end; align-items: center; gap: 17px; padding-bottom: 3px; color: #858585;`;
const TimelinePanel = styled.div`flex: 1; min-width: 0; display: flex; flex-direction: column; border-right: 1px solid ${c.line};`;
const TLTools = styled.div`display: flex; align-items: center; height: 22px; flex: none; background: ${c.bar}; ${TB} { height: 21px; }`;
const TLSpace = styled.i`width: 10px; flex: none;`;
const Frames = styled.div`display: flex; margin-left: auto; padding-right: 11px; span { width: 37px; text-align: center; color: #dcdcdc; }`;
const TLGrid = styled.div`flex: 1; display: grid; grid-template-columns: 146px minmax(0, 1fr); border-top: 1px solid ${c.line};`;
const TrackHeads = styled.div`display: flex; flex-direction: column; background: ${c.bar}; border-right: 1px solid ${c.line};`;
const SelectBox = styled.label<{ $w: number; $h: number; $bg?: string; $pad?: string }>`
  position: relative; display: flex; align-items: center; width: ${p => p.$w}px; height: ${p => p.$h}px; flex: none;
  background: ${p => p.$bg ?? c.field}; border: 1px solid ${c.edge}; color: ${c.icon};
  select { appearance: none; width: 100%; height: 100%; border: 0; background: none; color: ${c.text}; text-align-last: center; padding: ${p => p.$pad ?? '0 14px 0 0'}; }
  > svg:last-child { position: absolute; right: 3px; pointer-events: none; }
  > svg:first-child { position: absolute; left: 51px; pointer-events: none; }
`;
const HeadRow = styled.div<{ $h: number }>`display: grid; grid-template-columns: 20px 1fr; height: ${p => p.$h}px; flex: none; border-bottom: 1px solid ${c.line};`;
const HeadCel = styled.div`border-left: 1px solid ${c.line}; border-top: 2px solid #545d74; padding-top: 1px; background: #484848;`;
const CelDark = styled.div`background: #3b3b3b; height: 60px;`;
const CelThumb = styled.div`width: 54px; height: 41px; background: #fff; outline: 1px solid #8a8a8a; outline-offset: -2px;`;
const CelName = styled.div`width: 54px; height: 18px; margin-top: 1px; background: #4e5566; line-height: 18px; padding-left: 1px; color: #b8bcc6;`;
const PaperHead = styled.div`flex: 1; display: grid; grid-template-columns: 20px 1fr; grid-template-rows: 27px 1fr; color: ${c.icon};`;
const PaperLabel = styled.div`display: flex; align-items: center; gap: 7px; padding-left: 5px; border-left: 1px solid ${c.line}; color: ${c.text}; svg { color: ${c.icon}; } span { margin-left: -3px; }`;
const PaperThumb = styled.div`grid-column: 2; width: 54px; margin-left: 1px; background: #fff;`;
const Lanes = styled.div`display: flex; flex-direction: column; min-width: 0; background: #424242;`;
const Ruler = styled.div`
  height: 26px; flex: none; display: flex; overflow: hidden; border-bottom: 1px solid ${c.line};
  background: repeating-linear-gradient(90deg, transparent 0 16px, #35353588 16px 17px, transparent 17px 25px) 0 100% / 100% 5px no-repeat,
    linear-gradient(90deg, #4c4d52 156px, #2222a4 156px 167px, #a92f2f 167px 180px, #484848 180px 267px, #2222a4 267px 277px, #464646 277px 542px, #505157 542px);
`;
const RulerCells = styled.div`display: flex; margin-left: -15px;`;
const Cell = styled.span<{ $c: string }>`
  width: 25px; flex: none; display: flex; flex-direction: column; justify-content: flex-end; align-items: center; line-height: 12px; color: ${p => p.$c};
  b { color: #fff; } i { font-style: normal; color: #8d8d8d; }
`;
const Tracks = styled.div`display: flex; height: 122px; flex: none;`;
const lines = 'repeating-linear-gradient(90deg, transparent 0 12px, rgba(0,0,0,.07) 12px 13px, transparent 13px 24px, rgba(0,0,0,.07) 24px 25px)';
const Zone = styled.div<{ $bg: string; $w?: number }>`
  ${p => (p.$w ? css`width: ${p.$w}px; flex: none;` : css`flex: 1;`)}
  background: linear-gradient(transparent 77px, #343434 77px 78px, transparent 78px), ${lines}, ${p => p.$bg};
`;
const Active = styled(Zone)`
  display: grid; grid-template-rows: 4px 40px 32px 10px 19px 1fr; position: relative; box-shadow: -1px 0 #5558c0, 1px 0 #2828c8;
  background: linear-gradient(90deg, #6d2c2e 13px, transparent 13px) 0 0 / 100% 104px no-repeat, ${lines}, #3a3a3a;
`;
const Cel = styled.div`width: 54px; background: #fff; box-shadow: 1px 1px #000;`;
const ActiveName = styled.b`padding: 9px 0 0 2px; color: #fff;`;
const ClipBar = styled.div`border: solid #9a9a9a; border-width: 2px 1px; display: flex; justify-content: space-between; padding: 0 6px; &::before, &::after { content: ''; width: 1px; background: #9a9a9a; }`;

/* ---------- side buttons ---------- */
const SideBar = styled(DockBar)`padding: 0 8px 2px 3px;`;
const SideList = styled.div`display: grid; grid-auto-rows: 1fr; gap: 4px; height: 418px; padding: 1px 5px 0 3px;`;
const SideButton = styled.button`display: grid; place-items: center; background: ${c.bar}; color: ${c.icon}; outline: 1px solid ${c.line};`;

/* ---------- right panels ---------- */
const NavView = styled.div`display: flex; justify-content: center; height: 123px; flex: none; background: ${c.stage}; gap: 25px; padding-right: 2px;`;
const NavPaper = styled.div`width: 163px; background: #fff; outline: 1px solid #000;`;
const NavEdge = styled.i`width: 2px; background: #d01414;`;
const NavControls = styled.div`flex: none; height: 45px; background: ${c.bar}; color: ${c.icon}; padding: 2px 2px 0 4px;`;
const NavRow = styled.div`display: flex; align-items: center; height: 21px; > span { width: 47px; text-align: right; color: #dcdcdc; } > button { width: 21px; } > i { height: 19px; margin: 0 1px; }`;
const LPBody = styled(Body)`flex: none; height: 167px; padding: 4px 3px 0 5px; border-right: 14px solid #424242; font: 11px/13px ${arial};`;
const Group = styled.fieldset`border: 0; border-top: 1px solid ${c.edge}; margin: 0; padding: 0 0 0 11px; height: 39px; legend { padding: 0 1px; margin-left: -8px; }`;
const GroupTall = styled(Group)`padding-top: 3px;`;
const EffectRow = styled.div`display: flex; width: 83px; height: 21px; margin: 0 -1px 0 auto; border: 1px solid ${c.edge}; background: #505050; color: ${c.icon}; justify-content: space-around;`;
const LayerTop = styled.div`flex: none; background: ${c.bar}; color: ${c.icon}; height: 69px;`;
const LRow = styled.div<{ $h: number }>`display: flex; align-items: center; height: ${p => p.$h}px; > button { width: 21px; }`;
const BoxButton = styled(Plain)`padding-left: 3px;`;
const Opacity = styled(SliderBox)`
  margin: 0 4px 0 7px; border: 0; background: repeating-conic-gradient(#fff 0 25%, #cfcfcf 0 50%) 0 0 / 10px 10px;
  &::before { content: ''; position: absolute; inset: 0; background: linear-gradient(90deg, transparent, #aaa); }
`;
const ComboDim = styled.button`display: flex; align-items: center; justify-content: space-around; height: 19px; background: #494949; color: ${c.dim}; && { width: 36px; } margin-right: 3px; svg + svg { color: #999; }`;
const LayerColorBtn = styled.button`
  && { width: 37px; } height: 21px; margin-left: auto; display: flex; align-items: center; justify-content: space-between; padding: 0 3px; border: 1px solid #8a8a8a; background: ${c.field};
`;
const LayerList = styled(Body)`flex: 1; padding-right: 14px;`;
const Layer = styled.div`display: grid; grid-template-columns: 21px 19px 1fr; height: 31px; border-bottom: 1px solid ${c.line}; color: ${c.icon}; &:first-child { height: 32px; }`;
const LCell = styled.div`display: grid; place-items: center; border-right: 1px solid ${c.line};`;
const LMain = styled.div<{ $on?: boolean; $pad: number }>`
  display: flex; align-items: center; gap: 7px; padding-left: ${p => p.$pad}px; background: ${p => (p.$on ? c.sel : 'none')};
  font: 11px/12px ${roboto}; color: ${c.text}; svg { color: ${c.icon}; }
`;
const Tick = styled.input`appearance: none; width: 12px; height: 12px; border: 1px solid #303030; border-radius: 2px;`;
const Thumb = styled.div<{ $checker?: boolean }>`
  width: ${p => (p.$checker ? 33 : 28)}px; height: ${p => (p.$checker ? 27 : 21)}px;
  ${p => (p.$checker
    ? css`border: 1px solid #fff; padding: 2px; box-shadow: inset 0 0 0 2px #2c3c58; background: repeating-conic-gradient(#fff 0 25%, #cfcfcf 0 50%) 0 0 / 8px 8px content-box;`
    : css`background: #fff;`)}
`;
const PaperIcon = styled.div`width: 18px; height: 18px; margin: -3px -3px 0 6px; background: #fff; display: grid; place-items: center; && svg { color: #444; }`;
const LowText = styled.span`padding-top: 12px;`;
const FolderText = styled.span`padding-left: 2px;`;
const Spin = styled.span`display: flex; flex-direction: column; button { height: 7px; display: grid; place-items: center; }`;
const SmallSpace = styled.i`width: 3px; flex: none;`;
const LeftPad = styled.i`width: 32px; flex: none;`;

/* ---------- data ---------- */
const menus = ['File', 'Edit', 'Animation', 'Layer', 'Select', 'View', 'Filter', 'Window', 'Help'];
const toolGroups = [
  [['search', 'Zoom'], ['hand', 'Hand'], ['film', 'Operation'], ['move', 'Move layer'], ['marquee', 'Selection'], ['wand', 'Auto select'], ['dropper', 'Eyedropper']],
  [['nib', 'Pen'], ['nibSolid', 'Pencil'], ['brush', 'Brush'], ['airbrush', 'Airbrush'], ['tape', 'Decoration'], ['eraser', 'Eraser'], ['blend', 'Blend'], ['mesh', 'Liquify']],
  [['bucketBig', 'Fill'], ['gradient', 'Gradient'], ['lineT', 'Figure'], ['frame', 'Frame'], ['ruler', 'Ruler'], ['text', 'Text'], ['balloon', 'Balloon'], ['correct', 'Correct line']],
];
const brushes: [string, number][] = [
  ['0.7', 1], ['1', 1], ['1.5', 1], ['2', 1], ['2.5', 1], ['3', 2], ['4', 3], ['5', 4],
  ['6', 4], ['7', 5], ['8', 6], ['10', 8], ['12', 9], ['15', 12], ['17', 13], ['20', 16],
  ['25', 20], ['30', 24], ['40', 25], ['50', 25], ['60', 25], ['70', 25], ['80', 25], ['100', 25],
  ['', 25], ['', 25], ['', 25], ['', 25], ['', 25], ['', 25], ['', 25], ['', 25],
];
type T = { n: string; l: string; dim?: boolean; on?: boolean; s?: number; w?: number } | number;
const toolbar: T[] = [
  { n: 'clip', l: 'Clip Studio' }, 4, { n: 'newDoc', l: 'New' }, { n: 'open', l: 'Open' }, { n: 'saveDisk', l: 'Save', dim: true }, { n: 'down', l: 'More', s: 11, w: 14 }, 4,
  { n: 'undo', l: 'Undo', dim: true }, { n: 'redo', l: 'Redo', dim: true }, 4,
  { n: 'burst', l: 'Clear' }, { n: 'burstSel', l: 'Clear outside', dim: true }, { n: 'bucket', l: 'Fill' }, { n: 'transform', l: 'Transform' }, 3,
  { n: 'desel', l: 'Deselect', dim: true }, { n: 'invert', l: 'Invert', dim: true }, { n: 'selBorder', l: 'Border', dim: true }, 4,
  { n: 'snapRuler', l: 'Snap to ruler', on: true }, { n: 'snapSpecial', l: 'Snap to special ruler', on: true }, { n: 'snapGrid', l: 'Snap to grid' }, 3,
  { n: 'phone', l: 'Companion' }, 4, { n: 'help', l: 'Help' },
];
const timelineTools: T[] = [
  { n: 'graph', l: 'Graph', dim: true }, 0, { n: 'film', l: 'Timeline', on: true }, { n: 'filmPlus', l: 'New timeline' }, 0,
  { n: 'zoomOut', l: 'Zoom out' }, { n: 'zoomIn', l: 'Zoom in' }, 0,
  { n: 'first', l: 'First', dim: true }, { n: 'prev', l: 'Previous', dim: true }, { n: 'play', l: 'Play' }, { n: 'nextF', l: 'Next' }, { n: 'last', l: 'Last' }, 0,
  { n: 'loop', l: 'Loop', on: true }, 0,
  { n: 'celFolder', l: 'New folder' }, { n: 'celNew', l: 'New cel' }, { n: 'celLink', l: 'Link cel' }, { n: 'celCut', l: 'Unlink cel' }, 0,
  { n: 'onion', l: 'Onion skin' }, 0,
  { n: 'diamond', l: 'Keyframe', dim: true }, { n: 'down', l: 'Interpolation', s: 11, w: 16 }, { n: 'diamondDel', l: 'Delete keyframe', dim: true }, { n: 'fps', l: 'Onion cel' }, { n: 'edit', l: 'Edit', dim: true },
];
const frames = [-14, -12, -10, -8, -6, -4, -2, ...Array.from({ length: 26 }, (_, i) => i * 2 + 1)];
const frameColor = (f: number) => (f === 1 ? '#cf5c5c' : f === 9 ? '#5a5ac8' : f > 1 && f < 9 ? '#d8d8d8' : '#878787');

const ToolGlyph = ({ n }: { n: string }) => (n === 'gradient' ? <GradientIcon /> : n === 'text' ? <LetterA>A</LetterA> : <Icon n={n} s={n === 'film' || n === 'marquee' ? 18 : 20} />);

function ColorWheel() {
  return (
    <WheelBox>
      <Hue /><Hole />
      <Triangle width="138" height="138" viewBox="0 0 138 138">
        <defs>
          <linearGradient id="toRed" gradientUnits="userSpaceOnUse" x1="44" y1="26" x2="81" y2="90"><stop offset="0" stopColor="#f00" /><stop offset="1" stopColor="#000" /></linearGradient>
          <linearGradient id="toCyan" gradientUnits="userSpaceOnUse" x1="44" y1="112" x2="81" y2="47"><stop offset="0" stopColor="#000" /><stop offset="1" stopColor="#0ff" /></linearGradient>
        </defs>
        <path d="M44 26L119 69L44 112z" fill="url(#toRed)" />
        <path className="add" d="M44 26L119 69L44 112z" fill="url(#toCyan)" />
        <circle cx="44" cy="112" r="4" fill="#222" stroke="#fff" strokeWidth="1.5" />
        <g transform="rotate(30 124 101)"><rect x="119" y="97" width="10" height="8" fill="#0cd8f2" stroke="#000" strokeWidth="4" /><rect x="119" y="97" width="10" height="8" fill="#0cd8f2" stroke="#fff" strokeWidth="2" /></g>
      </Triangle>
    </WheelBox>
  );
}

export default function App() {
  return (
    <Page>
      <Global />
      <TitleBar>
        <Title>{'Animation1 (720 x 540px With blank space:864 x 648px 144dpi 100.0%)  - CLIP STUDIO PAINT PRO'}</Title>
        <WinButtons>
          <Plain aria-label="Minimize"><Icon n="min" s={11} /></Plain>
          <Plain aria-label="Maximize"><Icon n="max" s={13} /></Plain>
          <Plain aria-label="Close"><Icon n="close" s={11} w={2} /></Plain>
        </WinButtons>
      </TitleBar>
      <MenuBar>{menus.map(m => <MenuItem key={m}>{m}</MenuItem>)}</MenuBar>

      <Work>
        <Column as="aside">
          <DockBar $gap={18}><Plain aria-label="Collapse tools"><Icon n="lefts" s={11} /></Plain><Icon n="grip" s={13} /></DockBar>
          <ToolTab>
            <ToolBurger aria-label="Tool menu"><Icon n="burger" s={9} /></ToolBurger>
            <ToolTabFace><Icon n="pencil" s={16} /></ToolTabFace>
          </ToolTab>
          <ToolList>
            {toolGroups.map((g, i) => (
              <React.Fragment key={i}>
                {i > 0 && <ToolRule />}
                {g.map(([n, l]) => <ToolButton key={n} $on={n === 'film'} aria-label={l}><ToolGlyph n={n} /></ToolButton>)}
              </React.Fragment>
            ))}
          </ToolList>
          <Filler><SwatchSet /></Filler>
        </Column>

        <Column>
          <DockBar $gap={15}>
            <Plain aria-label="Collapse"><Icon n="lefts" s={11} /></Plain><Plain aria-label="Back"><Icon n="leftTall" s={9} w={2} /></Plain><Spacer /><Icon n="grip" s={13} />
          </DockBar>
          <Tabs tabs={[{ icon: 'subIcon', label: 'Sub Tool: Operation', name: 'Sub Tool' }]} />
          <GroupRow><GroupTab><Icon n="objectSel" s={19} w={1.2} />Operation</GroupTab></GroupRow>
          <SubBody>
            <SubGrid>
              <SubTool><Icon n="objectSel" w={1.2} /><span>Object</span></SubTool>
              <SubTool><Icon n="layerSel" w={1.2} /><span>Select layer</span></SubTool>
              <SubTool><Icon n="lamp" /><span>Light table</span></SubTool>
              <SubTool $on><Icon n="film" s={18} /><span>Edit timeline</span></SubTool>
            </SubGrid>
            <AddSub><Icon n="plusSolid" s={13} />Add sub tool</AddSub>
          </SubBody>
          <Footer>
            <Plain aria-label="Import"><Icon n="save" s={16} /></Plain><Plain aria-label="Duplicate"><Icon n="dup" s={16} /></Plain><Plain aria-label="Delete"><Icon n="trash" s={16} /></Plain>
          </Footer>
          <Gap />
          <Tabs tabs={[{ icon: 'gearPencil', label: 'Tool property: Edit timeline', name: 'Tool property' }]} />
          <PropHead>Edit timeline<Icon n="unlock" s={14} /></PropHead>
          <PropBody>
            <PropRow>Click
              <Segment role="group" aria-label="Click">
                <SegButton $w={100}><Icon n="back" s={17} /><span>Back</span></SegButton>
                <SegButton $w={99} $on><Icon n="next" s={17} /><span>Next</span></SegButton>
              </Segment>
            </PropRow>
            <PropRow>Drag
              <Segment role="group" aria-label="Drag">
                <SegButton $w={22} $on aria-label="Whole"><Icon n="drag" s={18} /></SegButton>
                <SegButton $w={20} aria-label="Cut"><Icon n="cut" s={17} /></SegButton>
                <SegButton $w={17} aria-label="More"><Icon n="downWide" s={11} w={2} /></SegButton>
              </Segment>
            </PropRow>
          </PropBody>
          <Footer><Plain aria-label="Reset"><Icon n="reset" s={17} /></Plain><Plain aria-label="Settings"><Icon n="wrench" s={16} /></Plain></Footer>
          <Gap />
          <Tabs tabs={[{ icon: 'circlePencil', label: 'Brush Size', name: 'Brush Size' }]} />
          <BrushArea>
            <BrushGrid>
              {brushes.map(([l, d], i) => <BrushCell key={i} aria-label={l || 'Brush size'}><Dot $d={d} /><span>{l}</span></BrushCell>)}
            </BrushGrid>
            <VScroll a={0} b={64} />
          </BrushArea>
          <Gap />
          <Tabs tabs={[
            { icon: 'wheel', label: 'Color Whe', name: 'Color Wheel', w: 81 }, { icon: 'slidersI', name: 'Color Slider' }, { icon: 'setI', name: 'Color Set' }, { icon: 'mount', name: 'Color Mixing' },
            { icon: 'strip', name: 'Approximate Color' }, { icon: 'folders', name: 'Color History' }, { icon: 'nodes', name: 'Intermediate Color' },
          ]} />
          <ColorBody>
            <ColorLeft><SwatchSet big /></ColorLeft>
            <ColorRight>
              <ColorWheel />
              <Rgb>
                <Channel $c="#b00000">0</Channel><Channel $c="#00b000">0</Channel><Channel $c="#0000d8">0</Channel>
                <Plain aria-label="Switch color space"><Icon n="wheelLine" s={17} /></Plain>
              </Rgb>
            </ColorRight>
          </ColorBody>
        </Column>

        <Center>
          <Toolbar>
            {toolbar.map((t, i) => (typeof t === 'number' ? <Rule key={i} $m={t} /> : <TB key={i} $on={t.on} $dim={t.dim} $w={t.w} aria-label={t.l}><Icon n={t.n} s={t.s} w={t.s ? 2.4 : 1.4} /></TB>))}
          </Toolbar>
          <DocTabs>
            <DocTab>Animation1<Plain aria-label="Close document"><Icon n="close" s={9} w={2} /></Plain></DocTab>
            <Plain aria-label="Documents"><Icon n="down" s={9} w={3} /></Plain>
          </DocTabs>
          <StageRow>
            <Stage><Paper><Frame /></Paper></Stage>
            <VScroll a={30} b={41} />
          </StageRow>
          <ViewBar>
            <ViewTools>
              <ShapeSlider kind="ramp" w={102} h={12} value={60} name="Zoom" text="100.0" />
              <Plain aria-label="Zoom out"><Icon n="minus" s={11} w={2} /></Plain><Plain aria-label="Zoom in"><Icon n="plus" s={11} w={2} /></Plain><Plain aria-label="Fit"><Icon n="square" s={9} /></Plain>
              <ViewGap />
              <ShapeSlider kind="sine" w={102} h={12} value={50} name="Rotation" text="0.0" />
              <Plain aria-label="Rotate left"><Icon n="rotL" s={11} w={2} /></Plain><Plain aria-label="Rotate right"><Icon n="rotR" s={11} w={2} /></Plain><Plain aria-label="Reset rotation"><Icon n="reset" s={12} w={2} /></Plain>
              <ScrollEnd aria-label="Scroll left"><Icon n="left" s={10} w={2.4} /></ScrollEnd>
            </ViewTools>
            <HTrack />
            <ScrollEnd aria-label="Scroll right"><Icon n="right" s={10} w={2.4} /></ScrollEnd><Corner />
          </ViewBar>

          <TimelineRow>
            <Gutter><Icon n="downWide" s={9} w={2} /><Icon n="downs" s={10} w={2} /></Gutter>
            <TimelinePanel>
              <Tabs tabs={[{ icon: 'film', label: 'Timeline', name: 'Timeline' }]} />
              <TLTools>
                {timelineTools.map((t, i) => (typeof t === 'number' ? <TLSpace key={i} /> : <TB key={i} $on={t.on} $dim={t.dim} $w={t.w ?? 21} aria-label={t.l}><Icon n={t.n} s={t.s ?? 17} w={t.s ? 2.4 : 1.6} /></TB>))}
                <Frames><span>1</span><span>/</span><span>1</span><span>/</span><span>8</span></Frames>
              </TLTools>
              <TLGrid>
                <TrackHeads>
                  <SelectBox $w={141} $h={26} $bg="#646464">
                    <select aria-label="Timeline" defaultValue="1"><option value="1">Timeline 1</option></select>
                    <Icon n="downWide" s={10} w={2} />
                  </SelectBox>
                  <HeadRow $h={78}>
                    <span />
                    <HeadCel><CelDark><CelThumb /><CelName>1</CelName></CelDark></HeadCel>
                  </HeadRow>
                  <PaperHead>
                    <Plain aria-label="Show paper"><Icon n="eye" s={16} /></Plain>
                    <PaperLabel><Icon n="page" s={16} /><Icon n="plusBox" s={12} /><span>Paper :</span></PaperLabel>
                    <PaperThumb />
                  </PaperHead>
                </TrackHeads>
                <Lanes>
                  <Ruler>
                    <RulerCells>
                      {frames.map(f => <Cell key={f} $c={frameColor(f)}>{f === 1 && <b>1</b>}{f === 31 && <i>1</i>}{f}</Cell>)}
                    </RulerCells>
                  </Ruler>
                  <Tracks>
                    <Zone $bg="#4b4c51" $w={167} />
                    <Active $bg="#3a3a3a" $w={100}><i /><Cel /><ActiveName>1</ActiveName><ClipBar /><i /><Cel /></Active>
                    <Zone $bg="#444444" $w={275} />
                    <Zone $bg="#4b4c51" />
                    <VScroll a={15} b={69} />
                  </Tracks>
                </Lanes>
              </TLGrid>
            </TimelinePanel>
          </TimelineRow>
        </Center>

        <Column>
          <SideBar><Plain aria-label="Back"><Icon n="leftTall" s={9} w={2} /></Plain><Spacer /><Plain aria-label="Collapse"><Icon n="rights" s={11} /></Plain></SideBar>
          <SideList>
            {['quick', 'f1', 'f2', 'f3', 'f4', 'f5', 'f6', 'f7', 'f8', 'f9', 'f10'].map(n => <SideButton key={n} aria-label={`Material ${n}`}><Icon n={n} /></SideButton>)}
          </SideList>
        </Column>

        <Column as="aside">
          <DockBar $gap={16}><Icon n="grip" s={13} /><Spacer /><Plain aria-label="Forward"><Icon n="rightTall" s={9} w={2} /></Plain><Plain aria-label="Collapse"><Icon n="rights" s={11} /></Plain></DockBar>
          <Tabs tabs={[{ icon: 'navigator', label: 'Navigator', name: 'Navigator', w: 78 }, { icon: 'subview', name: 'Sub View' }, { icon: 'itemBank', name: 'Item bank' }, { icon: 'info', name: 'Information' }]} />
          <NavView><NavEdge /><NavPaper /><NavEdge /></NavView>
          <NavControls>
            <NavRow>
              <ShapeSlider kind="ramp" w={92} h={15} value={59} name="Navigator zoom" /><span>100.0</span>
              <Plain aria-label="Zoom out"><Icon n="minusC" s={18} /></Plain><Plain aria-label="Zoom in"><Icon n="plusC" s={18} /></Plain><Plain aria-label="100%"><Icon n="squareC" s={18} /></Plain>
              <Rule /><Plain aria-label="Fit to navigator"><Icon n="fit1" s={16} /></Plain><Plain aria-label="Fit to screen"><Icon n="fit2" s={14} w={1.8} /></Plain>
            </NavRow>
            <NavRow>
              <ShapeSlider kind="sine" w={92} h={15} value={51} name="Navigator rotation" /><span>0.0</span>
              <Plain aria-label="Rotate left"><Icon n="rotL" s={16} /></Plain><Plain aria-label="Rotate right"><Icon n="rotR" s={16} /></Plain><Plain aria-label="Reset rotation"><Icon n="reset" s={18} /></Plain>
              <Rule /><Plain aria-label="Flip horizontal"><Icon n="flipH" s={18} /></Plain><Plain aria-label="Flip vertical"><Icon n="flipV" s={17} /></Plain>
            </NavRow>
          </NavControls>
          <Gap />
          <Tabs tabs={[{ icon: 'layerProp', label: 'Layer Property', name: 'Layer Property', w: 101 }, { icon: 'layerSearch', name: 'Search Layer' }, { icon: 'lamp', name: 'Animation cels' }]} />
          <LPBody>
            <Group><legend>Effect</legend>
              <EffectRow>
                <Plain aria-label="Border effect"><Icon n="border" s={17} /></Plain><Plain aria-label="Tone"><Icon n="tone" s={14} /></Plain><Plain aria-label="Layer color"><Icon n="layerColor" s={17} /></Plain><Plain aria-label="More"><Icon n="downWide" s={10} w={2} /></Plain>
              </EffectRow>
            </Group>
            <GroupTall><legend>Expression color</legend>
              <SelectBox $w={163} $h={21} $pad="0 0 0 9px">
                <Icon n="color" s={17} />
                <select aria-label="Expression color" defaultValue="c"><option value="c">Color</option></select>
                <Icon n="downWide" s={9} w={2.4} />
              </SelectBox>
            </GroupTall>
          </LPBody>
          <Gap />
          <Tabs tabs={[{ icon: 'layers', label: 'Layer', name: 'Layer', w: 57 }, { icon: 'history', label: 'History', name: 'History', w: 67 }, { icon: 'auto', label: 'Auto Action', name: 'Auto Action', w: 89 }]} />
          <LayerTop>
            <LRow $h={21}>
              <SelectBox $w={41} $h={21}><BoxButton aria-label="Palette color"><Icon n="box" s={17} w={1.6} /></BoxButton><Icon n="downWide" s={9} w={2.4} /></SelectBox>
              <SmallSpace />
              <SelectBox $w={80} $h={21}><select aria-label="Blending mode" defaultValue="n"><option value="n">Normal</option></select><Icon n="downWide" s={9} w={2.4} /></SelectBox>
              <Opacity $w={84} $h={9}><Range type="range" $t={17} min={0} max={100} defaultValue={100} aria-label="Opacity" /></Opacity>
              <span>100</span>
              <Spin><Plain aria-label="Increase"><Icon n="up" s={11} w={2} /></Plain><Plain aria-label="Decrease"><Icon n="down" s={11} w={2} /></Plain></Spin>
            </LRow>
            <LRow $h={22}>
              <LeftPad />
              {[['clipBelow', 'Clip to layer below'], ['lighthouse', 'Reference layer'], ['draft', 'Draft layer'], ['lock', 'Lock layer'], ['lockAlpha', 'Lock transparent pixels']].map(([n, l]) => <Plain key={n} aria-label={l}><Icon n={n} s={16} /></Plain>)}
              <ComboDim aria-label="Enable mask"><Icon n="maskX" s={17} /><Icon n="downWide" s={9} w={2} /></ComboDim>
              <ComboDim aria-label="Ruler range"><Icon n="rulerX" s={17} /><Icon n="downWide" s={9} w={2} /></ComboDim>
              <LayerColorBtn aria-label="Layer color">
                <svg width="16" height="16"><rect x="5" y="5" width="10" height="10" fill="#fff" /><rect x="0" y="0" width="11" height="11" fill="#3b8eea" stroke="#333" /></svg>
                <Icon n="downWide" s={10} w={2} />
              </LayerColorBtn>
            </LRow>
            <LRow $h={26}>
              <Plain aria-label="Two panes"><Icon n="palette" s={16} /></Plain><Spacer />
              <Plain aria-label="New raster layer"><Icon n="newLayer" s={17} /></Plain><Plain aria-label="New vector layer"><Icon n="newVec" s={17} /></Plain><Plain aria-label="New folder"><Icon n="newFolder" s={18} /></Plain>
              <Plain $dim aria-label="Transfer down"><Icon n="transfer" s={17} /></Plain><Plain $dim aria-label="Merge down"><Icon n="merge" s={17} /></Plain><Plain aria-label="Create mask"><Icon n="mask" s={16} /></Plain>
              <Plain $dim aria-label="Apply mask"><Icon n="applyMask" s={17} /></Plain><Plain aria-label="Delete layer"><Icon n="trash" s={16} /></Plain>
            </LRow>
          </LayerTop>
          <LayerList>
            <Layer>
              <LCell><Plain aria-label="Show Animation folder"><Icon n="eye" s={16} /></Plain></LCell>
              <LCell><Tick type="checkbox" aria-label="Select Animation folder" /></LCell>
              <LMain $pad={3}><Icon n="downWide" s={9} w={2.2} /><Icon n="animFolder" s={19} /><FolderText>100 % Normal<br />Animation folder : 1</FolderText></LMain>
            </Layer>
            <Layer>
              <LCell><Plain aria-label="Show layer 1"><Icon n="eye" s={16} /></Plain></LCell>
              <LCell><Icon n="edit" s={16} /></LCell>
              <LMain $pad={21} $on><Thumb $checker /><span>100 % Normal<br />1</span></LMain>
            </Layer>
            <Layer>
              <LCell><Plain aria-label="Show Paper"><Icon n="eye" s={16} /></Plain></LCell>
              <LCell><Tick type="checkbox" aria-label="Select Paper" /></LCell>
              <LMain $pad={8}><Thumb /><PaperIcon><Icon n="page" s={16} /></PaperIcon><LowText>Paper</LowText></LMain>
            </Layer>
          </LayerList>
        </Column>
      </Work>
      <Bottom />
    </Page>
  );
}
